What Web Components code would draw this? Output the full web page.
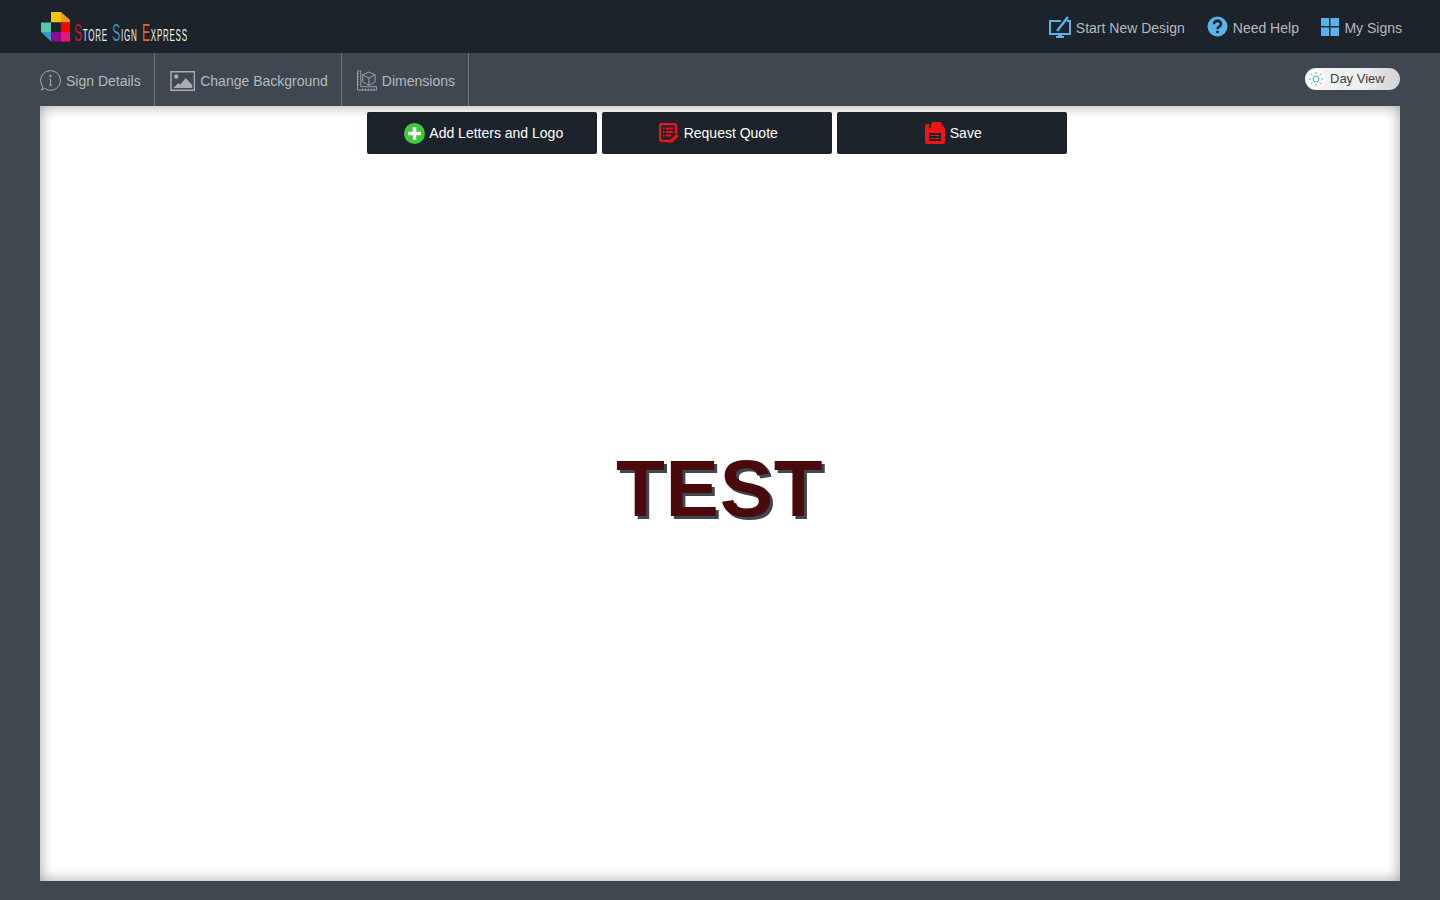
<!DOCTYPE html>
<html lang="en">
<head>
<meta charset="utf-8">
<title>Store Sign Express</title>
<style>
  html, body { margin: 0; height: 100%; background: #3f4751; }
  body { font-family: "Liberation Sans", Arial, sans-serif; overflow: hidden; }
  svg { display: block; }
</style>
</head>
<body>

<template id="app-header-tpl">
  <style>
    :host { display: flex; height: 53px; background: #1c232b; align-items: center; justify-content: space-between; padding: 0 38px 0 41px; box-sizing: border-box; }
    .nav { display: flex; align-items: center; gap: 22.5px; }
  </style>
  <slot name="logo"></slot>
  <div class="nav"><slot></slot></div>
</template>

<template id="top-link-tpl">
  <style>
    :host { display: flex; align-items: center; gap: 4px; color: #b6babf; font-size: 14px; line-height: 16px; }
    span { padding-top: 2px; }
    ::slotted(svg) { display: block; }
  </style>
  <slot name="icon"></slot><span><slot></slot></span>
</template>

<template id="sub-bar-tpl">
  <style>
    :host { display: flex; height: 53px; align-items: stretch; justify-content: space-between; padding: 0 40px; box-sizing: border-box; background: #3f4751; }
    .tabs { display: flex; align-items: stretch; }
  </style>
  <div class="tabs"><slot></slot></div>
  <slot name="right"></slot>
</template>

<template id="sub-tab-tpl">
  <style>
    :host { display: flex; align-items: center; gap: 5px; color: #b6babf; font-size: 14px; padding: 2px 13px 0 15px; border-right: 1px solid #6f757c; }
    :host([first]) { padding-left: 0; }
  </style>
  <slot name="icon"></slot><span><slot></slot></span>
</template>

<template id="day-toggle-tpl">
  <style>
    :host { display: flex; align-items: center; align-self: flex-start; width: 95px; height: 22px; margin-top: 15px; border-radius: 11px; background: linear-gradient(90deg, #f4f4f4 0%, #eeeeee 60%, #d2d2d2 100%); color: #3a3f46; font-size: 13px; box-sizing: border-box; }
    .knob { width: 20px; height: 20px; margin: 0 4px 0 1px; border-radius: 50%; background: #fff; display: flex; align-items: center; justify-content: center; }
    span { padding-bottom: 1px; }
  </style>
  <div class="knob"><slot name="icon"></slot></div><span><slot></slot></span>
</template>

<template id="sign-canvas-tpl">
  <style>
    :host { display: block; position: relative; height: 775px; margin: 0 40px; background: #fff; box-shadow: inset 0 0 14px rgba(0,0,0,.38); }
    .tools { display: flex; gap: 5px; padding: 6px 0 0 327px; }
  </style>
  <div class="tools"><slot name="tools"></slot></div>
  <slot></slot>
</template>

<template id="tool-button-tpl">
  <style>
    :host { display: flex; align-items: center; justify-content: center; gap: 4.5px; width: 230px; height: 42px; padding-left: 3px; background: #1c232b; color: #fff; font-size: 14px; border-radius: 2px; box-sizing: border-box; }
  </style>
  <slot name="icon"></slot><span><slot></slot></span>
</template>

<template id="sign-text-tpl">
  <style>
    :host { position: absolute; left: 576px; top: 337px; font-weight: 700; font-size: 80px; line-height: 92px; letter-spacing: .7px; color: #4a0a0c; text-shadow: 3px 3px 0 #3f4751; white-space: nowrap; }
  </style>
  <slot></slot>
</template>

<template id="brand-logo-tpl">
  <style>
    :host { display: flex; align-items: flex-end; height: 30px; margin-top: 1px; }
    .word { display: flex; align-items: baseline; flex: none; transform-origin: 0 100%; transform: scaleX(.5); width: 232px; margin: 0 -116px -5px 4px; white-space: nowrap; color: #f0f0f0; font-size: 16px; letter-spacing: 1.5px; }
    .cap { font-size: 24px; }
    span { flex: none; }
    .r { color: #d2161e; } .b { color: #2d9fc4; } .o { color: #f0680f; }
    .sp { width: 9px; }
  </style>
  <slot name="mark"></slot>
  <div class="word"><span class="cap r">S</span><span>TORE</span><span class="sp"></span><span class="cap b">S</span><span>IGN</span><span class="sp"></span><span class="cap o">E</span><span>XPRESS</span></div>
</template>

<app-header>
  <brand-logo slot="logo">
    <svg slot="mark" width="29" height="30" viewBox="0 0 29 30">
      <path fill="#ffc20e" d="M10 0h10v10.500H10z"/>
      <path fill="#f7941d" d="M20 0l9 8v2.500h-9z"/>
      <path fill="#5fc2b4" d="M0 10.500h10V20H0z"/>
      <path fill="#1c232b" d="M10 10.500h10V20H10z"/>
      <path fill="#ff0000" d="M20 10.500h9V20h-9z"/>
      <path fill="#2d9fc4" d="M0 20h10v9.500z"/>
      <path fill="#8b0a8e" d="M10 20h10v9.500H10z"/>
      <path fill="#f0146e" d="M20 20h9v9.500h-9z"/>
    </svg>
  </brand-logo>
  <top-link>
    <svg slot="icon" width="22" height="22" viewBox="0 0 22 22" fill="none" stroke="#5cb3ea" style="margin-right:.5px"><path stroke-width="2" d="M12 5H1v13h20V5h-3"/><path fill="#5cb3ea" stroke="none" d="M9 18h4v2h2v2H7v-2h2z"/><path stroke-width="2.400" d="M8 15L19 1"/></svg>
    Start New Design
  </top-link>
  <top-link style="margin-left:-.5px">
    <svg slot="icon" width="21" height="21" viewBox="0 0 21 21" style="margin-right:1px"><circle cx="10.500" cy="10.500" r="10" fill="#5cb3ea"/><path fill="none" stroke="#1c232b" stroke-width="2.600" d="M7 8.200c0-4.400 7-4.400 7-.2 0 2.600-3.500 2.600-3.500 5"/><rect x="9.200" y="14.600" width="2.600" height="2.600" fill="#1c232b"/></svg>
    Need Help
  </top-link>
  <top-link>
    <svg slot="icon" width="18" height="18" viewBox="0 0 19 19" fill="#5cb3ea" style="margin-right:1px"><rect width="8.500" height="8.500"/><rect x="10" width="9" height="8.500"/><rect y="10" width="8.500" height="9"/><rect x="10" y="10" width="9" height="9"/></svg>
    My Signs
  </top-link>
</app-header>

<sub-bar>
  <sub-tab first>
    <svg slot="icon" width="21" height="21" viewBox="0 0 21 21" fill="none" stroke="#a9adb2"><path d="M10.500.7a9.800 9.800 0 1 1-6 17.500L1.500 20l1.200-3.600A9.800 9.800 0 0 1 10.500.7z"/><path d="M10.500 9v6M9 15.200h3M9.300 9h1.200"/><circle cx="10.500" cy="6" r=".8" fill="#a9adb2"/></svg>
    Sign Details
  </sub-tab>
  <sub-tab>
    <svg slot="icon" width="25.500" height="20" viewBox="0 0 25 20"><rect x=".75" y=".75" width="23.500" height="18.500" fill="none" stroke="#a9adb2" stroke-width="1.500"/><circle cx="6" cy="5.500" r="2.200" fill="#a9adb2"/><path fill="#a9adb2" d="M3 17l5-5 2 1.500L15.500 7l6.500 7v3z"/></svg>
    Change Background
  </sub-tab>
  <sub-tab>
    <svg slot="icon" width="20" height="21" viewBox="0 0 21 21" fill="none" stroke="#a9adb2" stroke-width=".9"><path d="M.5.500h3.500v16.500h16.500v3.500H.5z"/><path d="M0 3h2M0 6h2M0 9h2M0 12h2M0 15h2M6 21v-2M9 21v-2M12 21v-2M15 21v-2M18 21v-2"/><path d="M12.500 1.500l6.500 3v7.500l-6.500 3.500L6 12V4.500zM6 4.500l6.500 3.500 6.500-3.500M12.500 8v7.500"/></svg>
    Dimensions
  </sub-tab>
  <day-toggle slot="right">
    <svg slot="icon" width="14" height="14" viewBox="0 0 14 14" fill="none" stroke="#4a9fe0"><circle cx="7" cy="7" r="3"/><path d="M7 0v2M7 12v2M0 7h2M12 7h2M2 2l1.400 1.400M10.600 10.600L12 12M2 12l1.400-1.400M10.600 3.400L12 2"/></svg>
    Day View
  </day-toggle>
</sub-bar>

<sign-canvas>
  <tool-button slot="tools">
    <svg slot="icon" width="21" height="21" viewBox="0 0 21 21"><circle cx="10.500" cy="10.500" r="10.500" fill="#3fc93f"/><path fill="#fff" d="M8.800 4h3.400v4.800H17v3.400h-4.800V17H8.800v-4.800H4V8.800h4.800z"/></svg>
    Add Letters and Logo
  </tool-button>
  <tool-button slot="tools">
    <svg slot="icon" width="20" height="20" viewBox="0 0 20 20"><path fill="none" stroke="#f01414" stroke-width="2.400" d="M14 18H3a2 2 0 0 1-2-2V3a2 2 0 0 1 2-2h12a2 2 0 0 1 2 2v8"/><path stroke="#f01414" stroke-width="2" d="M4 5.500h1.500M7 5.500h7M4 9h1.500M7 9h7M4 12.500h1.500M7 12.500h5"/><path fill="#f01414" d="M17.500 11l2.300 2.300-6 5.700-3.300.8 1-3.300z"/></svg>
    Request Quote
  </tool-button>
  <tool-button slot="tools">
    <svg slot="icon" width="20" height="22" viewBox="0 0 20 22"><path fill="#f01414" d="M2 2h14l4 4v14a2 2 0 0 1-2 2H2a2 2 0 0 1-2-2V4a2 2 0 0 1 2-2z"/><rect x="7" y="0" width="9" height="5" fill="#f01414"/><rect x="4" y="2" width="2" height="4" fill="#1c232b"/><rect x="4" y="11" width="12" height="8" fill="#1c232b"/><path stroke="#f01414" stroke-width="1.200" d="M5.500 13.500h9M5.500 16.500h9"/></svg>
    Save
  </tool-button>
  <sign-text>TEST</sign-text>
</sign-canvas>

<script>
  // every element here just clones its template into an open shadow root
  function define(tag) {
    customElements.define(tag, class extends HTMLElement {
      constructor() {
        super();
        this.attachShadow({ mode: "open" });
        this.shadowRoot.appendChild(document.getElementById(tag + "-tpl").content.cloneNode(true));
      }
    });
  }
  ["app-header", "top-link", "sub-bar", "sub-tab", "day-toggle", "sign-canvas", "tool-button", "sign-text", "brand-logo"].forEach(define);
</script>
</body>
</html>
